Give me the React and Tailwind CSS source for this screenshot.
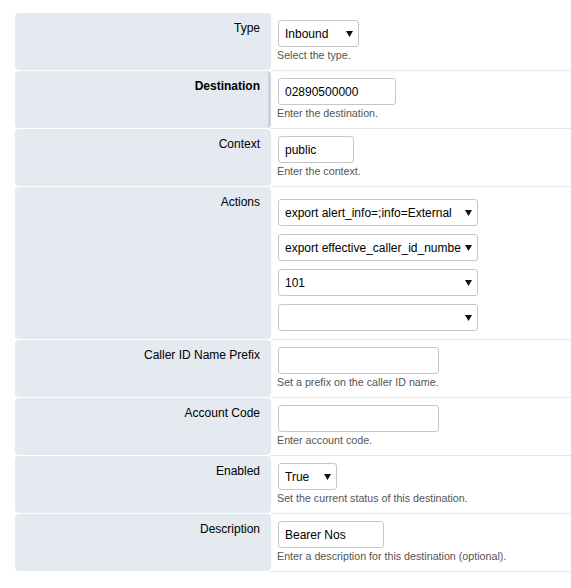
import React from "react";

const font = { fontFamily: '"Liberation Sans", Arial, sans-serif' };

function Arrow() {
  return (
    <svg
      className="pointer-events-none absolute right-[6px] top-[11px]"
      width="7"
      height="6"
      viewBox="0 0 7 6"
    >
      <polygon points="0,0 7,0 3.5,6" fill="#111" />
    </svg>
  );
}

function Select({ value, w }) {
  return (
    <div className={`relative ${w}`}>
      <select
        defaultValue={value}
        className="block h-[27px] w-full appearance-none rounded-[3px] border border-[#c6c6c6] bg-white pl-[6px] pr-[16px] text-[12px] text-black outline-none"
        style={font}
      >
        <option value={value}>{value}</option>
      </select>
      <Arrow />
    </div>
  );
}

function Input({ value, w }) {
  return (
    <input
      defaultValue={value}
      className={`block h-[27px] ${w} rounded-[3px] border border-[#c6c6c6] bg-white px-[6px] text-[12px] text-black outline-none`}
      style={font}
    />
  );
}

function Desc({ children }) {
  return (
    <div className="-ml-px mt-[2px] text-[10.7px] leading-[13px] text-[#555]">
      {children}
    </div>
  );
}

function Row({ label, bold, children, actions }) {
  return (
    <div className="flex">
      <div
        className={`mb-px w-[256px] shrink-0 rounded-[4px] bg-[#e5e9f0] pt-[8px] text-right text-[12px] leading-[14px] text-black ${
          bold ? "border-r-[3px] border-[#cdd2da] pr-[8px] font-bold" : "pr-[11px]"
        }`}
      >
        {label}
      </div>
      <div
        className={`flex-1 border-b border-[#e5e9f0] pl-[7px] ${
          actions ? "pt-[12px] pb-[8px]" : "pt-[7px] pb-[8px]"
        }`}
      >
        {children}
      </div>
    </div>
  );
}

export default function App() {
  return (
    <div className="min-h-[588px] bg-white pl-[15px] pt-[13px]" style={font}>
      <Row label="Type">
        <Select value="Inbound" w="w-[81px]" />
        <Desc>Select the type.</Desc>
      </Row>
      <Row label="Destination" bold>
        <Input value="02890500000" w="w-[118px]" />
        <Desc>Enter the destination.</Desc>
      </Row>
      <Row label="Context">
        <Input value="public" w="w-[76px]" />
        <Desc>Enter the context.</Desc>
      </Row>
      <Row label="Actions" actions>
        <div className="flex flex-col gap-[8px]">
          <Select value="export alert_info=;info=External" w="w-[200px]" />
          <Select value="export effective_caller_id_number=" w="w-[200px]" />
          <Select value="101" w="w-[200px]" />
          <Select value="" w="w-[200px]" />
        </div>
      </Row>
      <Row label="Caller ID Name Prefix">
        <Input value="" w="w-[161px]" />
        <Desc>Set a prefix on the caller ID name.</Desc>
      </Row>
      <Row label="Account Code">
        <Input value="" w="w-[161px]" />
        <Desc>Enter account code.</Desc>
      </Row>
      <Row label="Enabled">
        <Select value="True" w="w-[59px]" />
        <Desc>Set the current status of this destination.</Desc>
      </Row>
      <Row label="Description">
        <Input value="Bearer Nos" w="w-[106px]" />
        <Desc>Enter a description for this destination (optional).</Desc>
      </Row>
    </div>
  );
}
